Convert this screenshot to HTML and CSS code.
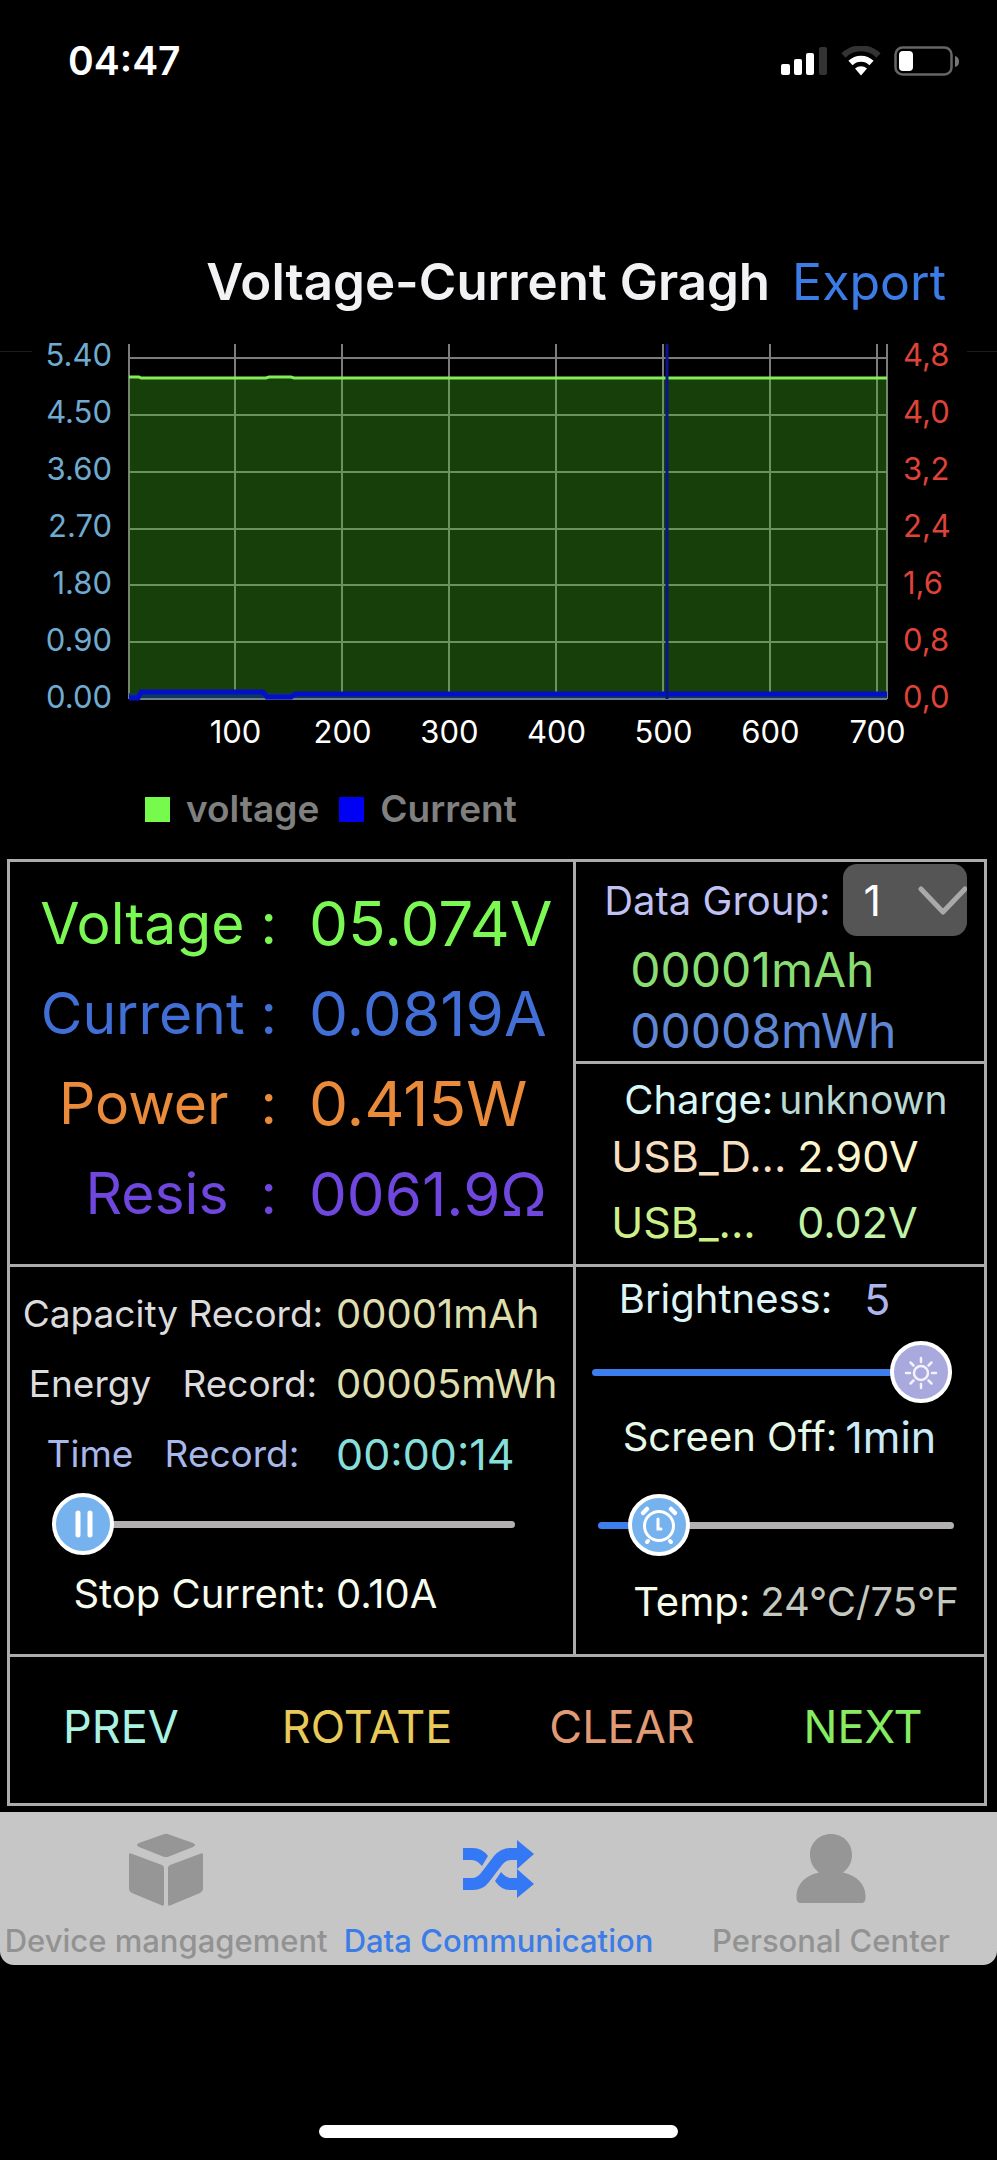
FILE: index.html
```html
<!DOCTYPE html>
<html lang="en">
<head>
<meta charset="utf-8">
<meta name="viewport" content="width=device-width, initial-scale=1">
<title>Voltage-Current Gragh</title>
<link rel="stylesheet" href="styles.css">
</head>
<body>
<div class="screen">
  <header class="status">
    <span class="status-time">04:47</span>
    <div class="status-icons">
      <svg width="47" height="30" viewBox="0 0 47 30" aria-hidden="true">
        <rect x="0" y="18" width="9" height="11" rx="2" fill="#fff"/>
        <rect x="13" y="13" width="8" height="16" rx="2" fill="#fff"/>
        <rect x="25" y="7" width="8" height="22" rx="2" fill="#fff"/>
        <rect x="38" y="1" width="8" height="28" rx="2" fill="#333"/>
      </svg>
      <svg width="40" height="30" viewBox="0 0 40 30" aria-hidden="true">
        <path d="M2.500 9.500A25 25 0 0 1 37.500 9.500" fill="none" stroke="#333" stroke-width="6"/>
        <path d="M9.500 17A15 15 0 0 1 30.500 17" fill="none" stroke="#fff" stroke-width="6"/>
        <path d="M14 22.500A9 9 0 0 1 26 22.500L20 29.500Z" fill="#fff"/>
      </svg>
      <svg width="66" height="30" viewBox="0 0 66 30" aria-hidden="true">
        <rect x="1.500" y="1.500" width="56" height="27" rx="7" fill="none" stroke="#666" stroke-width="2.500"/>
        <rect x="5" y="5" width="14" height="20" rx="4" fill="#fff"/>
        <path d="M61 10q4 1 4 5.500T61 21z" fill="#777"/>
      </svg>
    </div>
  </header>

  <main>
    <div class="title-bar">
      <h1 class="title">Voltage-Current Gragh</h1>
      <a class="export" href="#export">Export</a>
    </div>

    <section class="chart" aria-label="Voltage and current over time">
      <div class="plot-row">
        <div class="edge"></div>
        <div class="axis axis-volt">
          <span>5.40</span><span>4.50</span><span>3.60</span><span>2.70</span><span>1.80</span><span>0.90</span><span>0.00</span>
        </div>
        <svg class="plot" viewBox="0 0 758 356" preserveAspectRatio="none" aria-hidden="true">
          <path class="grid" d="M0 14H758M0 71H758M0 128H758M0 185H758M0 241H758M0 298H758"/>
          <path class="grid" d="M106 0V355M213 0V355M320 0V355M427 0V355M534 0V355M641 0V355M748 0V355M0 0V355M758 0V355"/>
          <path class="area" d="M0 34H758V355H0Z"/>
          <path class="area-current" d="M0 349H758V355H0Z"/>
          <path class="axis-line" d="M0 355H758"/>
          <path class="volt" d="M0 33H10L12 34H137L140 33H162L165 34H758"/>
          <path class="amp" d="M0 354H9L12 348H134L138 353H162L166 350H758"/>
          <path class="cursor" d="M538 0V355"/>
        </svg>
        <div class="axis axis-amp">
          <span>4,8</span><span>4,0</span><span>3,2</span><span>2,4</span><span>1,6</span><span>0,8</span><span>0,0</span>
        </div>
        <div class="edge"></div>
      </div>
      <div class="axis-x">
        <span></span><span>100</span><span>200</span><span>300</span><span>400</span><span>500</span><span>600</span><span>700</span>
      </div>
      <div class="legend">
        <i class="key key-volt"></i><span>voltage</span>
        <i class="key key-amp"></i><span>Current</span>
      </div>
    </section>

    <section class="panel">
      <div class="readings">
        <div class="reading volt-text"><span class="reading-name">Voltage :</span><span>05.074V</span></div>
        <div class="reading amp-text"><span class="reading-name">Current :</span><span>0.0819A</span></div>
        <div class="reading watt-text"><span class="reading-name">Power  :</span><span>0.415W</span></div>
        <div class="reading ohm-text"><span class="reading-name">Resis  :</span><span class="ohms">0061.9Ω</span></div>
      </div>

      <div class="side">
        <div class="group">
          <div class="group-head">
            <label class="label group-label" for="group">Data Group:</label>
            <div class="picker">
              <select id="group" class="picker-select"><option>1</option><option>2</option><option>3</option></select>
              <svg class="picker-arrow" width="50" height="30" viewBox="0 0 50 30" aria-hidden="true"><path d="M4 3L26 26L48 3" fill="none" stroke="#a9a9a9" stroke-width="5" stroke-linecap="round" stroke-linejoin="round"/></svg>
            </div>
          </div>
          <div class="total total-mah">00001mAh</div>
          <div class="total total-mwh">00008mWh</div>
        </div>
        <div class="usb">
          <div class="charge"><span class="label charge-name">Charge:</span><span class="charge-value">unknown</span></div>
          <div class="usb-row usb-plus"><span>USB_D...</span><span class="usb-value">2.90V</span></div>
          <div class="usb-row usb-minus"><span>USB_...</span><span class="usb-value">0.02V</span></div>
        </div>
      </div>

      <div class="records">
        <div class="record"><span class="record-name">Capacity Record:</span><span class="record-value">00001mAh</span></div>
        <div class="record"><span class="record-name">Energy   Record:</span><span class="record-value">00005mWh</span></div>
        <div class="record"><span class="record-name time-name">Time   Record:</span><span class="record-time">00:00:14</span></div>
        <div class="slider stop-slider">
          <input class="range" type="range" min="0" max="100" value="0" aria-label="Stop Current" style="--pos:0">
          <svg class="knob" style="--pos:0" viewBox="0 0 62 62" aria-hidden="true">
            <circle cx="31" cy="31" r="29" fill="#76b2ee" stroke="#fff" stroke-width="4"/>
            <path d="M26 20V42M38 20V42" stroke="#fff" stroke-width="5" stroke-linecap="round"/>
          </svg>
        </div>
        <div class="record stop"><span class="label stop-name">Stop Current:</span><span class="label">0.10A</span></div>
      </div>

      <div class="settings">
        <div class="setting"><span class="label setting-name bright-name">Brightness:</span><span class="value bright-value">5</span></div>
        <div class="slider bright-slider">
          <input class="range" type="range" min="0" max="5" value="5" aria-label="Brightness" style="--pos:1">
          <svg class="knob" style="--pos:1" viewBox="0 0 62 62" aria-hidden="true">
            <circle cx="31" cy="31" r="29" fill="#a9a9de" stroke="#fff" stroke-width="4"/>
            <g fill="none" stroke="#f4f2fb" stroke-width="2.500" stroke-linecap="round">
              <circle cx="31" cy="32" r="7"/>
              <path d="M31 17v4M31 43v4M16 32h4M42 32h4M20.500 21.500l3 3M38.500 39.500l3 3M20.500 42.500l3-3M38.500 24.500l3-3"/>
            </g>
          </svg>
        </div>
        <div class="setting off"><span class="label setting-name off-name">Screen Off:</span><span class="value off-value">1min</span></div>
        <div class="slider off-slider">
          <input class="range" type="range" min="0" max="10" value="1" aria-label="Screen Off" style="--pos:0.1">
          <svg class="knob" style="--pos:0.1" viewBox="0 0 62 62" aria-hidden="true">
            <circle cx="31" cy="31" r="29" fill="#76b2ee" stroke="#fff" stroke-width="4"/>
            <g fill="none" stroke="#fff" stroke-linecap="round">
              <circle cx="31" cy="32" r="14.500" stroke-width="3"/>
              <path d="M30 25V35H33" stroke-width="3"/>
              <path d="M15 19L19 15M43 15L47 19" stroke-width="4.500"/>
              <path d="M19 48L20 47M42 47L43 48" stroke-width="4"/>
            </g>
          </svg>
        </div>
        <div class="setting temp"><span class="label setting-name temp-name">Temp:</span><span class="label temp-value">24°C/75°F</span></div>
      </div>

      <div class="actions">
        <button class="action prev" type="button">PREV</button>
        <button class="action rotate" type="button">ROTATE</button>
        <button class="action clear" type="button">CLEAR</button>
        <button class="action next" type="button">NEXT</button>
      </div>
    </section>
  </main>

  <nav class="tabs">
    <a class="tab" href="#devices">
      <svg width="76" height="76" viewBox="0 0 76 76" aria-hidden="true">
        <g fill="#969696">
          <path d="M35 3.500Q38 2 41 3.500L65 12Q69 14 65 16L41 25.500Q38 26.500 35 25.500L11 16Q7 14 11 12Z"/>
          <path d="M1 23.500Q1 21.500 3 22.500L34 34Q36 35 36 37V73Q36 75.500 34 74.500L4 62Q1 60.500 1 58Z"/>
          <path d="M75 23.500Q75 21.500 73 22.500L42 34Q40 35 40 37V73Q40 75.500 42 74.500L72 62Q75 60.500 75 58Z"/>
        </g>
      </svg>
      <span>Device mangagement</span>
    </a>
    <a class="tab tab-on" href="#data" aria-current="page">
      <svg width="76" height="76" viewBox="0 0 76 76" aria-hidden="true">
        <g fill="#3478f6">
          <path d="M3 17H13Q22 17 28 25L22 35Q17 29 12 29H3Z"/>
          <path d="M3 47H12Q17 47 21 42L34 25Q41 17 50 17H57V9L74 23L57 38V29H51Q46 29 42 34L29 51Q23 59 13 59H3Z"/>
          <path d="M41 41Q46 47 51 47H57V38L74 53L57 67V59H50Q41 59 35 50Z"/>
        </g>
      </svg>
      <span>Data Communication</span>
    </a>
    <a class="tab" href="#personal">
      <svg width="76" height="76" viewBox="0 0 76 76" aria-hidden="true">
        <path fill="#969696" d="M38 3C50 3 59 12 59 23.500C59 31 56 37 50 41.500C65 45 72 54 72.500 64Q73 72 69 72H7Q3 72 3.500 64C4 54 11 45 26 41.500C20 37 17 31 17 23.500C17 12 26 3 38 3Z"/>
      </svg>
      <span>Personal Center</span>
    </a>
  </nav>
  <div class="home-area"><div class="home-bar"></div></div>
</div>
</body>
</html>
```

FILE: styles.css
```css
* { box-sizing: border-box; }

body {
  margin: 0;
  background: #000;
  color: #fff;
  font-family: Inter, "Liberation Sans", sans-serif;
}

.screen {
  display: flex;
  flex-direction: column;
  min-height: 100vh;
}

/* status bar */
.status {
  display: flex;
  justify-content: space-between;
  align-items: center;
  padding: 36px 37px 36px 68px;
  line-height: 50px;
}
.status-time { font-size: 39px; font-weight: 600; }
.status-icons { display: flex; align-items: center; gap: 13px; }
.status-icons svg { display: block; }

/* heading */
.title-bar {
  display: flex;
  justify-content: flex-end;
  align-items: center;
  gap: 22px;
  padding: 130px 51px 0 0;
  line-height: 60px;
}
.title { margin: 0; font-size: 51px; font-weight: 600; color: #f2f2f4; }
.export { font-size: 50px; color: #3b7ce6; text-decoration: none; }

/* chart */
.chart { padding-top: 32px; }
.plot-row {
  display: grid;
  grid-template-columns: 32px 97px 1fr 80px 30px;
}
.edge { border-top: 1px solid #1c1c1c; margin-top: 7px; }
.axis {
  display: flex;
  flex-direction: column;
  font-size: 31px;
  line-height: 57px;
  margin: -18px 0 0;
}
.axis-volt { align-items: flex-end; padding-right: 17px; color: #6fabd0; }
.axis-amp { padding-left: 16px; color: #df4238; }
.plot {
  display: block;
  width: 100%;
  height: 356px;
  overflow: visible;
}
.plot path { vector-effect: non-scaling-stroke; fill: none; }
.plot .grid { stroke: #7c7c7c; stroke-width: 2; }
.plot .area { fill: #43c01c; fill-opacity: 0.33; }
.plot .axis-line { stroke: #6b7f8c; stroke-width: 2; }
.plot .volt { stroke: #84ee58; stroke-width: 3; }
.plot .area-current { fill: #0c3a5c; }
.plot .amp { stroke: #0410c8; stroke-width: 5; }
.plot .cursor { stroke: #0a1488; stroke-width: 3; }
.axis-x {
  display: grid;
  grid-template-columns: 182fr repeat(7, 107fr) 66fr;
  margin-top: -13px;
  font-size: 31px;
  line-height: 40px;
  text-align: center;
}
.legend {
  display: flex;
  align-items: center;
  padding: 34px 0 27px 145px;
  font-size: 37px;
  font-weight: 600;
  line-height: 46px;
  color: #808080;
}
.key { width: 25px; height: 25px; margin-right: 16px; }
.key-volt { background: #76fb4c; }
.key-amp { background: #0000f5; }
.legend .key-amp { margin-left: 20px; }

/* measurement panel */
.panel {
  display: grid;
  grid-template-columns: 568fr 409fr;
  margin: 0 10px 0 7px;
  border: 3px solid #acacac;
}
.label { font-size: 40px; }
.value { font-size: 43px; }

.readings {
  padding: 17px 0 25px;
  border-right: 3px solid #acacac;
}
.reading {
  display: grid;
  grid-template-columns: 267px 1fr;
  column-gap: 32px;
  align-items: center;
  font-size: 62px;
  line-height: 90px;
}
.reading-name { font-size: 57px; text-align: right; white-space: pre; }
.ohms { font-size: 60px; }
.volt-text { color: #7cf855; }
.amp-text { color: #416fd6; }
.watt-text { color: #e98b3a; }
.ohm-text { color: #6f47de; }

.group { height: 202px; padding-top: 2px; border-bottom: 3px solid #acacac; }
.group-head { display: flex; align-items: center; padding: 0 0 3px 28px; gap: 13px; }
.group-label { color: #bfc2f2; }
.picker { position: relative; }
.picker-select {
  display: block;
  width: 124px;
  height: 72px;
  padding: 0 20px;
  border: 0;
  border-radius: 14px;
  appearance: none;
  background: #555;
  color: #fff;
  font: 43px Inter, "Liberation Sans", sans-serif;
}
.picker-arrow { position: absolute; right: 0; top: 22px; pointer-events: none; }
.total { padding-left: 54px; font-size: 48px; line-height: 61px; }
.total-mah { color: #8add72; }
.total-mwh { color: #5f86d4; }

.usb { padding-top: 13px; }
.charge { display: flex; align-items: center; gap: 6px; padding-left: 48px; line-height: 46px; }
.charge-name { color: #d8f6f6; }
.charge-value { font-size: 39px; color: #b9d8d3; }
.usb-row {
  display: grid;
  grid-template-columns: 186px 1fr;
  padding-left: 35px;
  font-size: 43px;
  line-height: 66px;
}
.usb-plus { color: #f6dfc0; }
.usb-plus .usb-value { color: #fdf6cc; }
.usb-minus { color: #cdf08a; }
.usb-minus .usb-value { color: #c0f2a8; }

.records {
  padding: 12px 0 25px;
  border-top: 3px solid #acacac;
  border-right: 3px solid #acacac;
}
.record {
  display: grid;
  grid-template-columns: 326px 1fr;
  align-items: center;
  line-height: 70px;
}
.record-name { font-size: 37px; text-align: center; white-space: pre; color: #dcdcde; }
.time-name { color: #a8b8ea; }
.record-value { font-size: 40px; color: #dedeae; }
.record-time { font-size: 43px; color: #86dfda; }
.stop { color: #f6fcee; }
.stop-name { text-align: right; padding-right: 10px; }

.slider { position: relative; height: 62px; }
.range {
  display: block;
  width: 100%;
  height: 62px;
  margin: 0;
  appearance: none;
  background: none;
}
.range::-webkit-slider-runnable-track {
  height: 7px;
  border-radius: 4px;
  background: linear-gradient(#3d7eed, #3d7eed) left / calc((100% - 62px) * var(--pos) + 31px) 7px no-repeat #b2b0b0;
}
.range::-webkit-slider-thumb {
  appearance: none;
  width: 62px;
  height: 62px;
  margin-top: -27px;
  background: transparent;
}
.knob {
  position: absolute;
  top: 0;
  left: calc((100% - 62px) * var(--pos));
  width: 62px;
  height: 62px;
  pointer-events: none;
}
.stop-slider { margin: 4px 58px 4px 42px; }

.settings { padding: 8px 0 28px; border-top: 3px solid #acacac; }
.setting {
  display: grid;
  grid-template-columns: 256px 1fr;
  column-gap: 12px;
  align-items: center;
  line-height: 48px;
}
.setting-name { text-align: right; }
.bright-name { color: #dff4f6; }
.bright-value { color: #adb5ee; padding-left: 20px; }
.off { grid-template-columns: 261px 1fr; column-gap: 8px; }
.off-name { color: #e6f9e8; }
.off-value { color: #cbeaf8; }
.bright-slider { margin: 18px 32px 10px 16px; }
.off-slider { margin: 33px 30px 22px 22px; }
.temp { grid-template-columns: 174px 1fr; column-gap: 10px; }
.temp-name { color: #f6fbea; }
.temp-value { color: #c4c8bf; }

.actions {
  grid-column: 1 / -1;
  display: grid;
  grid-template-columns: 222fr 270fr 240fr 242fr;
  border-top: 3px solid #acacac;
}
.action {
  padding: 0 0 6px;
  border: 0;
  background: none;
  font: 45px Inter, "Liberation Sans", sans-serif;
  line-height: 140px;
}
.prev { color: #a9f3e0; }
.rotate { color: #e8ca5a; }
.clear { color: #e09a74; }
.next { color: #86ec62; }

/* tab bar */
.tabs {
  display: grid;
  grid-template-columns: repeat(3, 1fr);
  margin-top: 6px;
  border-radius: 0 0 14px 14px;
  background: #c6c6c6;
}
.tab {
  display: flex;
  flex-direction: column;
  align-items: center;
  gap: 14px;
  padding: 19px 0 4px;
  font-size: 31px;
  font-weight: 500;
  line-height: 40px;
  color: #929292;
  text-decoration: none;
  white-space: nowrap;
}
.tab-on { color: #3b7ce6; }

.home-area {
  flex: 1;
  display: flex;
  justify-content: center;
  align-items: flex-end;
  padding-bottom: 22px;
}
.home-bar { width: 36%; height: 13px; border-radius: 7px; background: #fff; }
```
